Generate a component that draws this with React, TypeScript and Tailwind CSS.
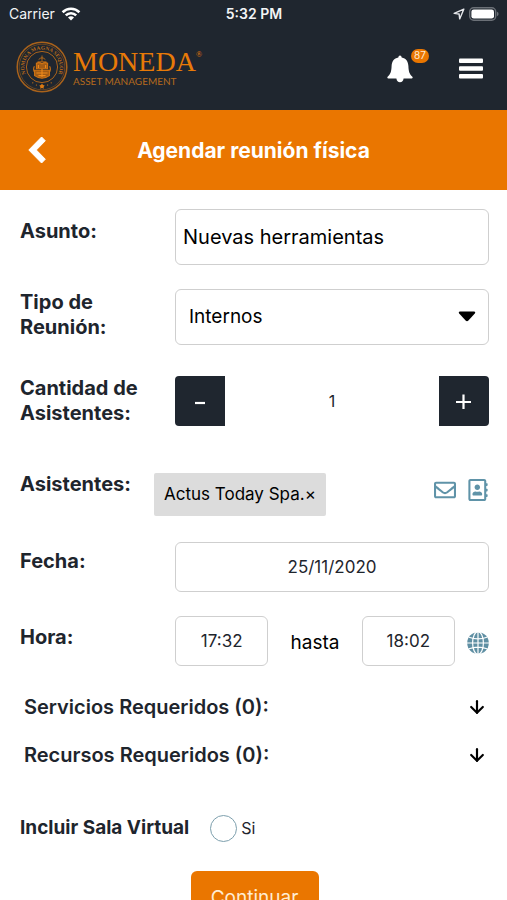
import { useState } from "react";
import type { ReactNode } from "react";
import { FaRegAddressBook, FaRegEnvelope } from "react-icons/fa";
import { ArrowDown } from "lucide-react";

function WifiIcon() {
  return (
    <svg viewBox="0 0 20 14" className="h-[14px] w-5" fill="none" stroke="white" strokeWidth="2.6" aria-hidden="true">
      <path d="M1.6 5.2a12 12 0 0 1 16.8 0" />
      <path d="M4.8 8.4a7.4 7.4 0 0 1 10.4 0" />
      <path d="M10 13.4 7 10.4a4.2 4.2 0 0 1 6 0z" fill="white" stroke="none" />
    </svg>
  );
}

function StatusBar() {
  return (
    <div className="grid h-7 grid-cols-3 items-center pr-2 pl-[9px] text-sm text-gray-100">
      <span className="flex items-center gap-1.5">
        Carrier
        <WifiIcon />
      </span>
      <span className="text-center font-semibold">5:32 PM</span>
      <span className="flex items-center justify-end gap-1">
        <svg viewBox="0 0 12 12" className="size-3" fill="none" stroke="#e5e7eb" strokeWidth="1.4" strokeLinejoin="round" aria-hidden="true">
          <path d="M10.8 1.2 1.2 5.4l4.9.6.6 4.9z" />
        </svg>
        <svg viewBox="0 0 30 14" className="h-[14px] w-[30px]" aria-hidden="true">
          <rect x="0.7" y="0.7" width="26" height="12.6" rx="4" fill="none" stroke="#6b7077" strokeWidth="1.4" />
          <rect x="2.4" y="2.4" width="22.6" height="9.2" rx="2.4" fill="white" />
          <path d="M28 4.8v4.4q1.6-.6 1.6-2.2T28 4.8" fill="#6b7077" />
        </svg>
      </span>
    </div>
  );
}

function Seal() {
  return (
    <svg viewBox="0 0 52 52" className="size-[52px]" aria-hidden="true">
      <g fill="none" stroke="#a9621b">
        <circle cx="26" cy="26" r="24.8" strokeWidth="1.5" />
        <circle cx="26" cy="26" r="22.8" strokeWidth="0.5" />
        <circle cx="26" cy="26" r="15.6" strokeWidth="1" />
      </g>
      <path id="seal-arc" d="M12.5 37.4A17.6 17.6 0 1 1 39.5 37.4" fill="none" />
      <text fill="#b86a1a" fontSize="5.4" fontFamily="'Liberation Serif', serif" fontWeight="700">
        <textPath href="#seal-arc" startOffset="50%" textAnchor="middle">
          NOMINA MAGNA SEQUOR
        </textPath>
      </text>
      <g fill="#dc7a12">
        <path d="M26 42.6l1 1.5 1.7.4-1.1 1.4.2 1.8-1.8-.7-1.8.7.2-1.8-1.1-1.4 1.7-.4z" />
        <circle cx="20.4" cy="44" r="0.6" />
        <circle cx="31.6" cy="44" r="0.6" />
        <circle cx="16.8" cy="41.8" r="0.6" />
        <circle cx="35.2" cy="41.8" r="0.6" />
      </g>
      <g fill="none" stroke="#d07413" strokeWidth="1.1">
        <path d="M26 14.5v6M22.6 18.6q3.4-3.6 6.8 0M21.5 20.8h9" strokeWidth="0.8" />
        <path d="M20.4 22.2q2.8-1.4 5.6.6 2.8-2 5.6-.6v5.6H20.4z" fill="#a35c15" />
        <path d="M18.4 25.2q-1.8 3.4.6 6.6M33.6 25.2q1.8 3.4-.6 6.6" />
        <path d="M18.6 29.2h14.8v5.4q-3.6 2.6-7.4 2.6t-7.4-2.6z" fill="#a35c15" />
        <path d="M22.4 24v3M29.6 24v3M20.4 32h11.2M22.4 34.6h7.2M26 28v8" stroke="#ee8a1c" />
      </g>
    </svg>
  );
}

function Brand() {
  return (
    <a href="#inicio" aria-label="Moneda Asset Management" className="flex items-center gap-[5px]">
      <Seal />
      <span className="flex flex-col pt-0.5 text-[#e87a08]">
        <span className="flex items-start font-['Liberation_Serif',serif] text-[28px] leading-[26px]">
          MONEDA
          <span className="text-[8px] leading-3">®</span>
        </span>
        <span className="font-[Lato,sans-serif] text-[10px] leading-3 text-[#b56a1d]">ASSET MANAGEMENT</span>
      </span>
    </a>
  );
}

function Globe() {
  return (
    <svg viewBox="0 0 22 22" className="size-[22px]" fill="none" stroke="white" strokeWidth="1.2" aria-hidden="true">
      <circle cx="11" cy="11" r="10.8" fill="#5f8fa3" stroke="none" />
      <path d="M11 0v22M0 11h22M2 5.200q9 3.200 18 0M2 16.800q9-3.200 18 0" />
      <ellipse cx="11" cy="11" rx="5.400" ry="11.400" />
    </svg>
  );
}

function Header() {
  return (
    <div className="flex h-[82px] items-center justify-between pr-6 pb-1 pl-4">
      <Brand />
      <div className="flex items-center gap-[46px]">
        <button type="button" aria-label="Notificaciones, 87 sin leer" className="relative mt-[3px]">
          <svg viewBox="0 0 26 28" className="h-7 w-[26px]" fill="white" aria-hidden="true">
            <path d="M13 0.500q1.500 0 1.700 2C19 3.200 21.200 6.600 21.400 11c.2 5.500 1 8 4 10.800.6.900.2 1.700-.8 1.700h-8q-.6 3.800-3.600 3.800t-3.600-3.800h-8c-1 0-1.400-.8-.8-1.700 3-2.800 3.800-5.300 4-10.800C4.800 6.600 7 3.200 11.300 2.500q.2-2 1.700-2z" />
          </svg>
          <span className="absolute -top-[6px] left-6 flex h-[14px] w-[18px] items-center justify-center rounded-full bg-[#ea7600] text-[10px] text-orange-100">
            87
          </span>
        </button>
        <button type="button" aria-label="Menú" className="mt-[3px]">
          <svg viewBox="0 0 24 21" className="h-[21px] w-6" fill="white" aria-hidden="true">
            <rect y="0.5" width="24" height="4.600" rx="1" />
            <rect y="8.200" width="24" height="4.600" rx="1" />
            <rect y="16" width="24" height="4.600" rx="1" />
          </svg>
        </button>
      </div>
    </div>
  );
}

function Field({ label, htmlFor, labelClass = "", children }: { label: string; htmlFor: string; labelClass?: string; children: ReactNode }) {
  return (
    <div className="grid grid-cols-[155px_1fr] items-start">
      <label htmlFor={htmlFor} className={`w-[134px] text-xl leading-[25px] font-bold ${labelClass}`}>
        {label}
      </label>
      {children}
    </div>
  );
}

const box = "w-full min-w-0 rounded-md border border-[#cfcfcf] bg-white";

function Accordion({ title }: { title: string }) {
  return (
    <button type="button" className="flex h-12 w-full items-center justify-between pr-0.5 pl-1 text-xl font-semibold">
      {title}
      <ArrowDown className="size-5 text-black" strokeWidth={2.6} aria-hidden="true" />
    </button>
  );
}

export default function App() {
  const [count, setCount] = useState(1);
  const [guests, setGuests] = useState(["Actus Today Spa."]);

  return (
    <div className="flex h-screen flex-col bg-white font-[Inter,'Liberation_Sans',sans-serif] text-[#1e252d]">
      <header className="shrink-0 bg-[#1f262f]">
        <StatusBar />
        <Header />
      </header>
      <div className="grid h-20 shrink-0 grid-cols-[60px_1fr_60px] items-center bg-[#ea7600] text-white">
        <button type="button" aria-label="Volver" className="flex justify-center pl-[14px]">
          <svg viewBox="0 0 18 28" className="h-7 w-[18px]" fill="white" stroke="white" strokeWidth="1" strokeLinejoin="round" aria-hidden="true">
            <path d="M13.600 1 17.300 4.800 8.300 14l9 9.200-3.700 3.800L.8 14z" />
          </svg>
        </button>
        <h1 className="pt-0.5 text-center text-[21px] font-bold">Agendar reunión física</h1>
      </div>
      <main className="min-h-0 flex-1 overflow-y-auto [scrollbar-width:none]">
        <form className="flex flex-col pt-[19px] pr-[18px] pb-6 pl-5" onSubmit={(e) => e.preventDefault()}>
          <Field label="Asunto:" htmlFor="asunto" labelClass="pt-[10px]">
            <input id="asunto" type="text" defaultValue="Nuevas herramientas" className={`${box} h-14 px-[7px] text-xl text-black`} />
          </Field>

          <div className="mt-6">
            <Field label="Tipo de Reunión:" htmlFor="tipo" labelClass="pt-px">
              <div className="relative">
                <select id="tipo" defaultValue="Internos" className={`${box} h-14 appearance-none px-[13px] text-[19px] text-black`}>
                  <option>Internos</option>
                  <option>Externos</option>
                </select>
                <svg viewBox="0 0 18 11" className="pointer-events-none absolute top-[22px] right-[13px] h-[11px] w-[18px]" aria-hidden="true">
                  <path d="M2 .5h14q2 .4.8 2L10.400 9.600q-1.400 1.300-2.800 0L1.200 2.500Q0 .9 2 .5z" />
                </svg>
              </div>
            </Field>
          </div>

          <div className="mt-[31px]">
            <Field label="Cantidad de Asistentes:" htmlFor="cantidad">
              <div className="flex items-center justify-between">
                <button type="button" aria-label="Restar asistente" onClick={() => setCount(Math.max(1, count - 1))} className="flex size-[50px] items-center justify-center rounded-l-sm bg-[#1f262f]">
                  <svg viewBox="0 0 16 16" className="size-4" stroke="white" strokeWidth="2.200" aria-hidden="true">
                    <path d="M3 10h10" />
                  </svg>
                </button>
                <output id="cantidad" className="text-base">{count}</output>
                <button type="button" aria-label="Sumar asistente" onClick={() => setCount(count + 1)} className="flex size-[50px] items-center justify-center rounded-r-sm bg-[#1f262f]">
                  <svg viewBox="0 0 16 16" className="size-4" stroke="white" strokeWidth="2.200" aria-hidden="true">
                    <path d="M0 9h15M7.500 1.500v15" />
                  </svg>
                </button>
              </div>
            </Field>
          </div>

          <div className="mt-[46px] flex items-start">
            <span className="w-[134px] shrink-0 text-xl leading-[25px] font-bold">Asistentes:</span>
            <div className="flex flex-1 pt-px">
              {guests.map((g) => (
                <span key={g} className="flex h-[43px] items-center rounded-xs bg-[#dcdcdc] px-[10px] text-[17px] whitespace-nowrap text-black">
                  {g}
                  <button type="button" aria-label={`Quitar ${g}`} onClick={() => setGuests(guests.filter((x) => x !== g))}>
                    ×
                  </button>
                </span>
              ))}
            </div>
            <div className="flex items-center gap-[11px] pt-[7px] text-[#5f93a8]">
              <button type="button" aria-label="Invitar por correo">
                <FaRegEnvelope className="size-[22px]" />
              </button>
              <button type="button" aria-label="Libreta de contactos">
                <FaRegAddressBook className="size-[22px]" />
              </button>
            </div>
          </div>

          <div className="mt-[26px]">
            <Field label="Fecha:" htmlFor="fecha" labelClass="pt-[7px]">
              <input id="fecha" type="text" defaultValue="25/11/2020" className={`${box} h-[50px] text-center text-[17px]`} />
            </Field>
          </div>

          <div className="mt-6">
            <Field label="Hora:" htmlFor="desde" labelClass="pt-[9px]">
              <div className="grid grid-cols-[3fr_3fr_3fr_auto] items-center">
                <input id="desde" type="text" defaultValue="17:32" className={`${box} h-[50px] text-center text-[17px]`} />
                <label htmlFor="hasta" className="pt-1 text-center text-[19px] text-black">hasta</label>
                <input id="hasta" type="text" defaultValue="18:02" className={`${box} h-[50px] text-center text-[17px]`} />
                <button type="button" aria-label="Zona horaria" className="pt-1 pl-3">
                  <Globe />
                </button>
              </div>
            </Field>
          </div>

          <div className="mt-[17px] flex flex-col">
            <Accordion title="Servicios Requeridos (0):" />
            <Accordion title="Recursos Requeridos (0):" />
          </div>

          <fieldset className="mt-[35px] flex items-center">
            <legend className="float-left mr-[21px] text-[19px] font-bold">Incluir Sala Virtual</legend>
            <label className="flex items-center gap-1 text-base">
              <input type="radio" name="sala" className="size-[27px] appearance-none rounded-full border border-[#7d9fad] checked:bg-[#7d9fad]" />
              Si
            </label>
          </fieldset>

          <button type="submit" className="mt-7 h-14 w-32 self-center rounded-md bg-[#ea7600] text-[19px] text-orange-100">
            Continuar
          </button>
        </form>
      </main>
    </div>
  );
}
